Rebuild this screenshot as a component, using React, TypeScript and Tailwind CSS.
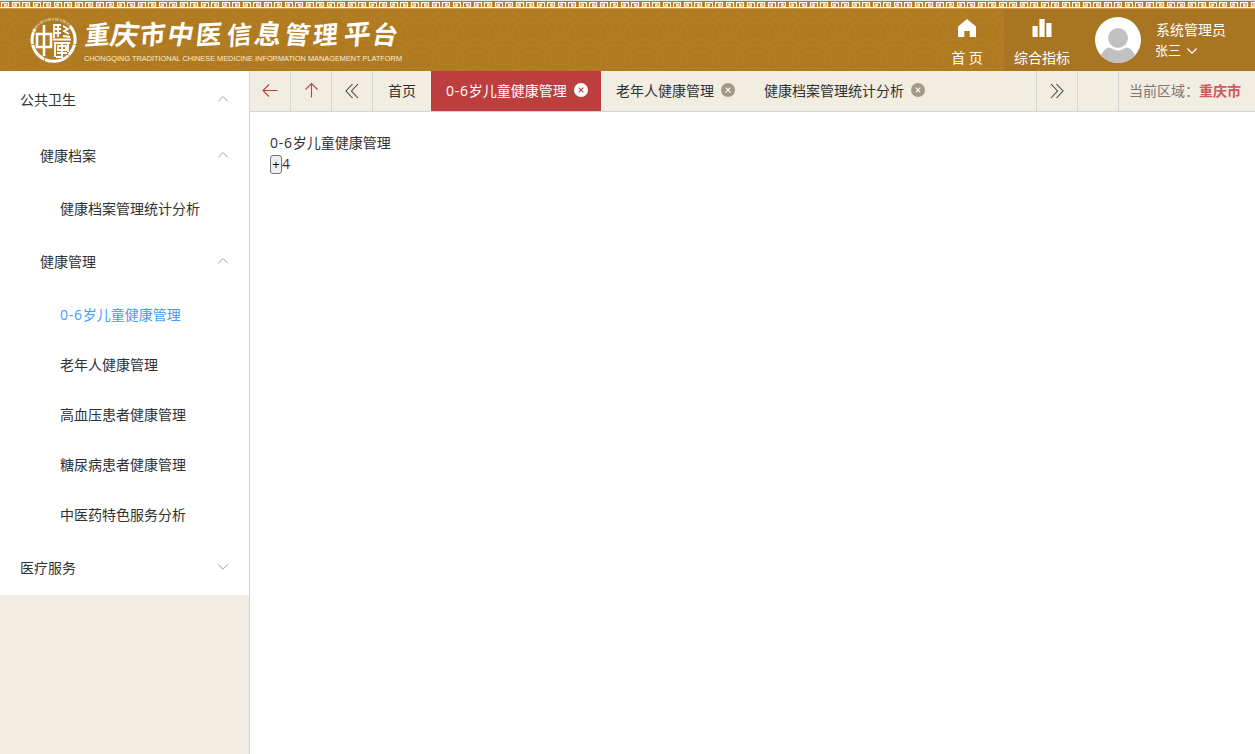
import React from "react";

const TITLE = [
  ["重", 85, 25, -4], ["庆", 111, 28, 3], ["市", 140, 26, -5], ["中", 168, 26, 2], ["医", 196, 26, -3], ["信", 227, 25, -6],
  ["息", 255, 27, 2], ["管", 285, 25, 3], ["理", 313, 25, -4], ["平", 344, 27, -5], ["台", 373, 25, 3],
] as const;

function KeyBorder() {
  return (
    <svg width="1255" height="9" className="block shrink-0">
      <defs>
        <pattern id="key" width="21" height="9" patternUnits="userSpaceOnUse">
          <rect width="21" height="9" fill="#b07a20" />
          <rect width="21" height="1" fill="#dfe3dc" />
          <path d="M0 7.6H2.5M1.5 8V2.5H8.5V6H4.7V4.4H6.8M12.5 7.6H21M19.5 8V2.5H12.5V6H16.3V4.4H14.2M1 7.6H13" fill="none" stroke="#fffbf0" strokeWidth="1.25" />
        </pattern>
      </defs>
      <rect width="1255" height="9" fill="url(#key)" />
    </svg>
  );
}

function Waves() {
  return (
    <svg className="absolute inset-0 h-full w-full">
      <defs>
        <pattern id="wave" width="56" height="28" patternUnits="userSpaceOnUse">
          <g fill="none" stroke="#c08f3c" strokeOpacity=".25" strokeWidth="1">
            <path d="M2 28A26 26 0 0 1 54 28M8 28A20 20 0 0 1 48 28M14 28A14 14 0 0 1 42 28" />
            <path d="M0 2A26 26 0 0 1 18 9M0 8A20 20 0 0 1 13 13M56 2A26 26 0 0 0 38 9M56 8A20 20 0 0 0 43 13" />
          </g>
        </pattern>
      </defs>
      <rect width="100%" height="100%" fill="url(#wave)" />
    </svg>
  );
}

function Emblem() {
  return (
    <svg width="48" height="48" viewBox="0 0 48 48" fill="none" stroke="#fff" className="absolute left-[29px] top-[7px]">
      <path d="M41 10A21.5 21.5 0 1 1 6 13" strokeWidth="3" strokeDasharray="19 .8 12 .6 25 .7" />
      <path d="M6 13C12 1 33 0 41 10" strokeWidth="2.6" strokeOpacity=".4" strokeDasharray="4 1 2 .8" />
      <path d="M8 18H22V31H8ZM15 9V40" strokeWidth="2.6" />
      <path d="M25 8V22M25 9H32M26 13H32M26 17H32M29 8V21M34 10L39 13L35 15L40 18M34 20L41 21M24 23.5H42M25 27H41M26 27V41M39 27V36M29 30H37V34H29ZM33 27V40M28 37H38M27 41H34" strokeWidth="1.8" />
    </svg>
  );
}

function Chevron({ down = false, className = "" }: { down?: boolean; className?: string }) {
  return (
    <svg width="12" height="12" viewBox="0 0 12 12" fill="none" stroke="currentColor" className={className}>
      <path d={down ? "M1.3 3.5L6 8.2L10.7 3.5" : "M1.3 8.2L6 3.5L10.7 8.2"} />
    </svg>
  );
}

function Double({ right = false }: { right?: boolean }) {
  return (
    <svg width="16" height="16" viewBox="0 0 16 16" fill="none" stroke="#444" strokeWidth="1.1">
      <path d={right ? "M2 1L8.5 8L2 15M7.5 1L14 8L7.5 15" : "M8.5 1L2 8L8.5 15M14 1L7.5 8L14 15"} />
    </svg>
  );
}

function Close({ active = false }: { active?: boolean }) {
  return (
    <svg width="14" height="14" viewBox="0 0 14 14" className="ml-[7px]">
      <circle cx="7" cy="7" r="7" fill={active ? "#fff" : "#a69886"} />
      <path d="M4.7 4.7L9.3 9.3M9.3 4.7L4.7 9.3" stroke={active ? "#bd3e3f" : "#fff"} strokeWidth="1.1" />
    </svg>
  );
}

function Child() {
  return <><span className="tracking-[0.75px]">0-6</span>岁儿童健康管理</>;
}

function Group({ label, sub = false, down = false, className }: { label: string; sub?: boolean; down?: boolean; className: string }) {
  return (
    <div className={`flex shrink-0 items-center justify-between pr-5 ${sub ? "pl-10" : "pl-5"} ${className}`}>
      <span>{label}</span>
      <Chevron down={down} className="mb-px text-[#9a9da2]" />
    </div>
  );
}

export default function App() {
  const cell = "flex w-[41px] shrink-0 items-center justify-center border-r border-[#d4d4d2]";
  const item = "flex h-[50px] items-center pl-[60px]";
  const tab = "flex items-center pb-[2px] pl-[15px]";
  return (
    <div className="flex h-[754px] w-[1255px] flex-col overflow-hidden bg-white font-['Open_Sans','Noto_Sans_CJK_SC',sans-serif] text-[14px] leading-[21px] text-[#303133]">
      <header className="flex h-[71px] shrink-0 flex-col bg-[#b07a20]">
        <KeyBorder />
        <div className="relative flex flex-1 text-white">
          <Waves />
          <Emblem />
          <h1 className="font-bold leading-[40px]">
            {TITLE.map(([ch, x, size, turn]) => (
              <span key={ch} style={{ left: x, fontSize: size, transform: `rotate(${turn}deg) skewX(-9deg)` }} className="absolute top-[5px]">{ch}</span>
            ))}
          </h1>
          <svg width="330" height="16" className="absolute left-[83px] top-[41px] overflow-visible">
            <text x="1" y="10.5" fill="#f8edd5" fontSize="7.5" fontFamily="Liberation Sans" textLength="318" lengthAdjust="spacingAndGlyphs">CHONGQING TRADITIONAL CHINESE MEDICINE INFORMATION MANAGEMENT PLATFORM</text>
          </svg>
          <nav className="relative ml-auto flex">
            <div className="flex w-[74px] flex-col items-center pt-[10px]">
              <svg width="20" height="18" viewBox="0 0 20 18" fill="#fff"><path d="M10 0L19 7.4V18H12.7V12H7.3V18H1V7.4Z" /></svg>
              <span className="mt-[10px]">首 页</span>
            </div>
            <div className="flex w-[251px] bg-[#a87522]">
              <div className="flex w-[76px] flex-col items-center pt-[10px]">
                <svg width="20" height="18" fill="#fff"><path d="M.5 7H5.7V18H.5ZM7.4 0H12.6V18H7.4ZM14.3 4H19.5V18H14.3Z" /></svg>
                <span className="mt-[10px]">综合指标</span>
              </div>
              <svg width="46" height="46" viewBox="0 0 46 46" className="ml-[15px] mt-2">
                <defs><clipPath id="av"><circle cx="23" cy="23" r="23" /></clipPath></defs>
                <circle cx="23" cy="23" r="23" fill="#fff" />
                <g clipPath="url(#av)" fill="#c1c1c1"><circle cx="23" cy="21" r="10" /><path d="M5 41Q8 31 15 30.5Q23 36.5 31 30.5Q38 31 41 41V46H5Z" /></g>
              </svg>
              <div className="ml-[15px] mt-[10px]">
                <div>系统管理员</div>
                <div className="flex items-center text-[13px]"><span className="-ml-px">张三</span><Chevron down className="ml-[5px] stroke-[1.3]" /></div>
              </div>
            </div>
          </nav>
        </div>
      </header>

      <div className="flex min-h-0 flex-1">
        <aside className="w-[250px] shrink-0 border-r border-[#d4d4d2] bg-[#f2ede1]">
          <div className="bg-white">
            <Group label="公共卫生" className="h-14" />
            <Group label="健康档案" sub className="h-14" />
            <div className={item}>健康档案管理统计分析</div>
            <Group label="健康管理" sub className="h-14" />
            <div className={`${item} text-[#409eff]`}><span><Child /></span></div>
            <div className={item}>老年人健康管理</div>
            <div className={item}>高血压患者健康管理</div>
            <div className={item}>糖尿病患者健康管理</div>
            <div className={item}>中医药特色服务分析</div>
            <Group label="医疗服务" down className="h-14" />
          </div>
        </aside>
        <main className="flex flex-1 flex-col">
          <div className="flex h-[41px] shrink-0 border-b border-[#d4d4d2] bg-[#f2ede1]">
            <div className={cell}><svg width="16" height="16" fill="none" stroke="#c43c42" strokeWidth="1.1"><path d="M15.5 7.5H1M7 1.5L1 7.5L7 13.5" /></svg></div>
            <div className={cell}><svg width="16" height="16" fill="none" stroke="#c43c42" strokeWidth="1.1" className="mb-[2px]"><path d="M8.5 15.5V1.5M2.5 7.5L8.5 1.5L14.5 7.5" /></svg></div>
            <div className={cell}><Double /></div>
            <div className="flex w-[58px] items-center justify-center pb-[2px]">首页</div>
            <div className={`${tab} w-[170px] bg-[#bd3e3f] text-white`}><span><Child /></span><Close active /></div>
            <div className={`${tab} w-[148px]`}>老年人健康管理<Close /></div>
            <div className={tab}>健康档案管理统计分析<Close /></div>
            <div className={`${cell} ml-auto w-[42px] border-l`}><Double right /></div>
            <div className={cell} />
            <div className="flex w-[136px] items-center pb-[2px] pl-[10px] text-[#777]">当前区域：<b className="font-bold text-[#d4555a]">重庆市</b></div>
          </div>
          <section className="p-5">
            <div><Child /></div>
            <div className="flex items-center"><button className="mt-[2px] flex h-[19px] w-3 items-center justify-center rounded-[3px] border border-[#767676] bg-[#efefef] text-[13px] text-black">+</button>4</div>
          </section>
        </main>
      </div>
    </div>
  );
}
